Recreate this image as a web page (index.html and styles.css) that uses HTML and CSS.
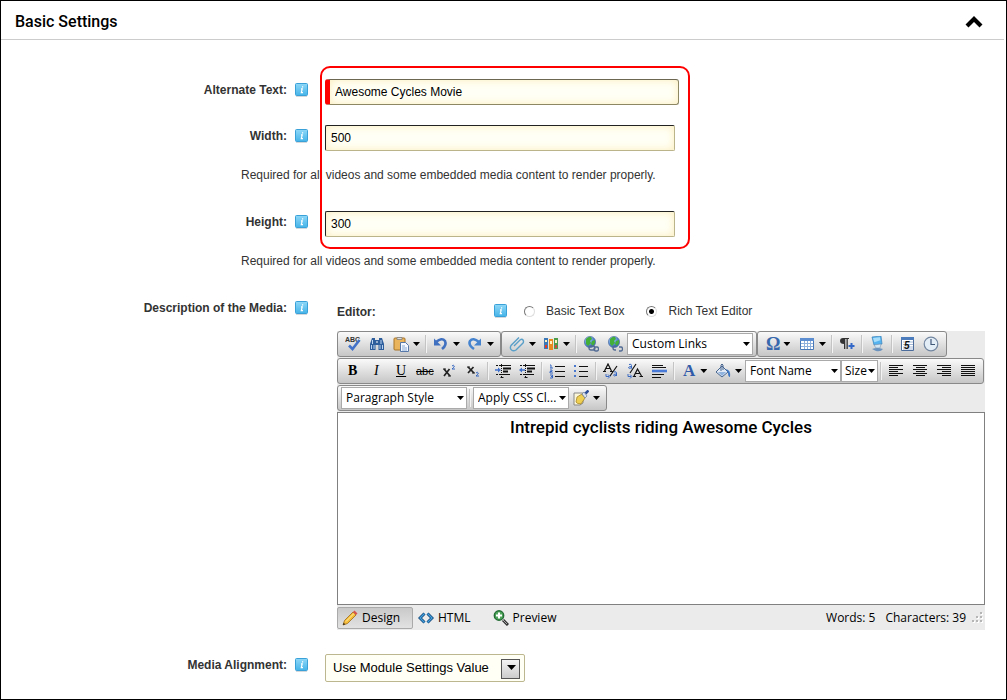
FILE: index.html
```html
<!DOCTYPE html>
<html lang="en">
<head>
<meta charset="utf-8">
<title>Basic Settings</title>
<link rel="stylesheet" href="styles.css">
</head>
<body>
<svg class="sprite" aria-hidden="true">
  <defs>
    <linearGradient id="info-fill" x1="0" y1="0" x2="0" y2="1"><stop offset="0" stop-color="#8fd8f8"/><stop offset="1" stop-color="#45b4e8"/></linearGradient>
    <radialGradient id="globe-fill" cx=".35" cy=".3" r=".8"><stop offset="0" stop-color="#a9d4ff"/><stop offset="1" stop-color="#174fa8"/></radialGradient>
    <symbol id="info" viewBox="0 0 13 14"><path d="M1 13.5h11" stroke="#d4d8da"/><rect x=".5" y=".5" width="12" height="12" rx="1" fill="url(#info-fill)" stroke="#3aa0d8"/><path d="M7.6 3.2v1.2M6 5.9h1.2L6.3 9.6H8" stroke="#fff" stroke-width="1.2" fill="none"/></symbol>
    <symbol id="globe" viewBox="0 0 16 16"><circle cx="7" cy="6" r="5.6" fill="url(#globe-fill)" stroke="#5474a8" stroke-width=".7"/><path d="M3 3q3-3 5-2l1 2-2 2 1 2-3 3-2-2zM9 5l3-1v3l-2 3-2-2z" fill="#43ae38"/></symbol>
  </defs>
</svg>
<main class="panel">
  <header class="panel-head">
    <h2 class="panel-title">Basic Settings</h2>
    <button class="collapse" type="button" aria-label="Collapse"><svg width="18" height="12" viewBox="0 0 18 12"><path d="M2 10 9 3l7 7" fill="none" stroke="#000" stroke-width="4.2"/></svg></button>
  </header>

  <form class="form">
    <div class="highlight"></div>
    <div class="row">
      <div class="label"><label for="alt">Alternate Text:</label><svg class="info"><use href="#info"/></svg></div>
      <input class="text required" id="alt" type="text" value="Awesome Cycles Movie">
    </div>
    <div class="row">
      <div class="label"><label for="width">Width:</label><svg class="info"><use href="#info"/></svg></div>
      <input class="text" id="width" type="text" value="500">
    </div>
    <p class="note">Required for all videos and some embedded media content to render properly.</p>
    <div class="row">
      <div class="label"><label for="height">Height:</label><svg class="info"><use href="#info"/></svg></div>
      <input class="text" id="height" type="text" value="300">
    </div>
    <p class="note">Required for all videos and some embedded media content to render properly.</p>

    <div class="row media">
      <div class="label"><span>Description of the Media:</span><svg class="info"><use href="#info"/></svg></div>
      <div class="media-body">
        <div class="mode">
          <span class="mode-label">Editor:</span>
          <svg class="info"><use href="#info"/></svg>
          <label class="choice"><input type="radio" name="mode">Basic Text Box</label>
          <label class="choice"><input type="radio" name="mode" checked>Rich Text Editor</label>
        </div>

        <div class="editor">
          <div class="bar">
            <div class="group">
              <button class="tool" type="button" title="Spell check"><svg class="ico" viewBox="0 0 16 16"><text x="0" y="6" class="tiny">ABC</text><path d="M4 9.500 7.500 13 14.500 4" fill="none" stroke="#4472c8" stroke-width="2.600"/></svg></button>
              <button class="tool" type="button" title="Find"><svg class="ico" viewBox="0 0 16 16"><path d="M3 2h3v2h4V2h3l2 6v6H9.500V9h-3v5H1V8z" fill="#2e5e9c"/><path d="M3.500 4v4M12 4v4M2.500 9v4M5 9v4M11 9v4M13.500 9v4" stroke="#bcd4f0"/><path d="M7 6h2" stroke="#fff"/></svg></button>
              <button class="tool drop" type="button" title="Paste"><svg class="ico" viewBox="0 0 16 16"><rect x="1" y="2" width="11" height="12" rx="1" fill="#e9b45c" stroke="#a87428"/><path d="M4 3.500V1.500h5v2z" fill="#ddd" stroke="#777" stroke-width=".7"/><path d="M7.500 6.500h5l3 3v6h-8z" fill="#f5f9ff" stroke="#5578a8"/><path d="M9 10h3M9 12h5M9 14h5" stroke="#6b94c8" stroke-width=".8"/></svg></button>
              <span class="sep"></span>
              <button class="tool drop" type="button" title="Undo"><svg class="ico" viewBox="0 0 16 16"><path d="M3 6q6-5 9-1 2 4-3 8" fill="none" stroke="#4070c0" stroke-width="2.600"/><path d="M1 2.500v7h7z" fill="#4070c0"/></svg></button>
              <button class="tool drop" type="button" title="Redo"><svg class="ico" viewBox="0 0 16 16"><path d="M12 6q-6-5-9-1-2 4 4 8" fill="none" stroke="#4583cf" stroke-width="2.600"/><path d="M14 2.500v7H7z" fill="#4583cf"/></svg></button>
            </div>
            <div class="group">
              <button class="tool drop" type="button" title="Attach"><svg class="ico" viewBox="0 0 16 16"><path d="m5 10 6-6q2-1.500 3 0t0 3l-7 7q-2.500 1.500-4.500 0T2 9.500l8-8" fill="none" stroke="#5a9fc8" stroke-width="1.400"/></svg></button>
              <button class="tool drop" type="button" title="Media"><svg class="ico" viewBox="0 0 16 16"><path d="M1 2h4v11H1z" fill="#3b78b8"/><path d="M6 3h4v11H6z" fill="#e88b1c"/><path d="M11 2h4v11h-4z" fill="#4d9c4a"/><path d="M2 4h2v2H2zM7 5h2v3H7zM12 4h2v3h-2z" fill="#fff3c0"/><path d="M2 9h2v3H2z" fill="#e03c28"/><path d="M12 9h2v3h-2z" fill="#cf4a3b"/></svg></button>
              <span class="sep"></span>
              <button class="tool" type="button" title="Insert link"><svg class="ico" viewBox="0 0 16 16"><use href="#globe"/><path d="M6 12q0-2 2-2h2q2 0 2 2t-2 2H8q-2 0-2-2zm5 1q0-2 2-2h1q1.500 0 1.500 2T14 15h-1q-2 0-2-2z" fill="none" stroke="#526b94" stroke-width="1.300"/></svg></button>
              <button class="tool" type="button" title="Remove link"><svg class="ico" viewBox="0 0 16 16"><use href="#globe"/><path d="M9 10H8q-2 0-2 2t2 2h1m3-3h2q1.500 0 1.500 2T14 15h-2" fill="none" stroke="#526b94" stroke-width="1.300"/></svg></button>
              <span class="pick wide"><select aria-label="Custom links"><option>Custom Links</option></select></span>
            </div>
            <div class="group">
              <button class="tool drop glyph omega" type="button" title="Symbol">Ω</button>
              <button class="tool drop" type="button" title="Table"><svg class="ico" viewBox="0 0 16 16"><path d="M1.500 2.500h13v11h-13z" fill="#fff" stroke="#4878b8"/><path d="M1 2h14v3H1z" fill="#5b8dd0"/><path d="M2 7.500h12M2 10.500h12M5.500 5v8M8.500 5v8M11.500 5v8" stroke="#8db0dd"/></svg></button>
              <span class="sep"></span>
              <button class="tool" type="button" title="Paragraph"><svg class="ico" viewBox="0 0 16 16"><path d="M4 2h6v1H8.800v10H7.500V3H6.300v10H5V8Q1 8 1 5t3-3z" fill="#333"/><path d="M12.500 7v6M9.500 10h6" stroke="#3468c8" stroke-width="2"/></svg></button>
              <span class="sep"></span>
              <button class="tool" type="button" title="Manage content"><svg class="ico" viewBox="0 0 16 16"><path d="m3 1 9-1 1 8-8 1z" fill="#55b4ef" stroke="#3b7fb8" stroke-width=".7"/><path d="m4 2 7-.7.3 3-6 2z" fill="#a9defb"/><path d="m5 9 7-1-1 4H7z" fill="#d5e6f3" stroke="#7795b5" stroke-width=".6"/><path d="M3 13q5-2 11 0-2 3-7 2z" fill="#6c93bd"/></svg></button>
              <span class="sep"></span>
              <button class="tool" type="button" title="Date"><svg class="ico" viewBox="0 0 16 16"><path d="M2.500 1.500h12v13h-12z" fill="#fff" stroke="#4c6c9c"/><path d="M2 1h13v3H2z" fill="#4c7cbc"/><path d="M4 6h10M4 8.500h10M4 11h10M4 13h10" stroke="#a4b8d4"/><text x="5" y="13" class="date">5</text></svg></button>
              <button class="tool" type="button" title="Time"><svg class="ico" viewBox="0 0 16 16"><circle cx="8" cy="8" r="6.800" fill="#e3edf6" stroke="#7286a0" stroke-width="1.200"/><path d="M8 3v5.500h4" fill="none" stroke="#405878" stroke-width="1.200"/></svg></button>
            </div>
          </div>

          <div class="bar">
            <div class="group">
              <button class="tool glyph bold" type="button">B</button>
              <button class="tool glyph italic" type="button">I</button>
              <button class="tool glyph under" type="button">U</button>
              <button class="tool glyph strike" type="button">abc</button>
              <button class="tool" type="button" title="Superscript"><svg class="ico" viewBox="0 0 16 16"><path d="m3 6 6 7M8.500 6 3 13" stroke="#222" stroke-width="1.700"/><path d="M2 6h3M7 13h3" stroke="#222"/><path d="M11 3q1.500-1.500 2.300 0Q13.500 4 11 6h3" fill="none" stroke="#3466c2"/></svg></button>
              <button class="tool" type="button" title="Subscript"><svg class="ico" viewBox="0 0 16 16"><path d="m3 4 6 6M8.500 4 3 10" stroke="#222" stroke-width="1.700"/><path d="M2 4h3M7 10h3" stroke="#222"/><path d="M11 10q1.500-1.500 2.300 0 .2 1-2.300 3h3" fill="none" stroke="#3466c2"/></svg></button>
              <span class="sep"></span>
              <button class="tool" type="button" title="Indent"><svg class="ico" viewBox="0 0 16 16"><path d="M1 2.500h2m1 0h12M1 11.500h2m1 0h11M5.500 14.500h3" stroke="#111"/><path d="M6.500 1v14" stroke="#111" stroke-dasharray="1 1"/><path d="M8 5.500h8M8 8.500h5" stroke="#111" stroke-width="1.800"/><path d="M0 7h4" stroke="#3f70cc" stroke-width="1.500"/><path d="M3 4.500 6 7 3 9.500z" fill="#3f70cc"/></svg></button>
              <button class="tool" type="button" title="Outdent"><svg class="ico" viewBox="0 0 16 16"><path d="M1 2.500h2m1 0h12M1 11.500h2m1 0h11M5.500 14.500h3" stroke="#111"/><path d="M6.500 1v14" stroke="#111" stroke-dasharray="1 1"/><path d="M8 5.500h8M8 8.500h5" stroke="#111" stroke-width="1.800"/><path d="M2 7h4" stroke="#3f70cc" stroke-width="1.500"/><path d="M3 4.500 0 7l3 2.500z" fill="#3f70cc"/></svg></button>
              <span class="sep"></span>
              <button class="tool" type="button" title="Numbered list"><svg class="ico" viewBox="0 0 16 16"><path d="M6 3.500h10M6 8.500h10M6 13.500h10" stroke="#111"/><path d="M1 2h1v3M1 5h3M1 7h2v1.500H1V10h3M1 12h2.500v3H1m1-1.500h1" fill="none" stroke="#3466c2"/></svg></button>
              <button class="tool" type="button" title="Bulleted list"><svg class="ico" viewBox="0 0 16 16"><path d="M6 3.500h9M6 8.500h9M6 13.500h9" stroke="#111"/><path d="M1 2h2v2H1zM1 7h2v2H1zM1 12h2v2H1z" fill="#4a78cc"/></svg></button>
              <span class="sep"></span>
              <button class="tool" type="button" title="Lower case"><svg class="ico" viewBox="0 0 16 16"><path d="M1.500 8 5 1l3.500 7M3 5.500h4M0 8.500h3M7 8.500h3M14 3 7 13" fill="none" stroke="#111" stroke-width="1.200"/><path d="M11 9q2.500-1 2.500 1v3m0-2q-3 0-3 1.300t3 0M3 11v2.500h3M5 11.500l2 2-2 2" fill="none" stroke="#3466c2"/></svg></button>
              <button class="tool" type="button" title="Upper case"><svg class="ico" viewBox="0 0 16 16"><path d="m7 13 3.500-7 4 7M8.500 10.500h4M6 13.500h3M12.500 13.500H16M9 1 3 10" fill="none" stroke="#111" stroke-width="1.200"/><path d="M2 1.500q2.500-1 2.500 1v3m0-2q-3 0-3 1.300t3 0M1 11v2.500h3M3 11.500l2 2-2 2" fill="none" stroke="#3466c2"/></svg></button>
              <button class="tool" type="button" title="Horizontal rule"><svg class="ico" viewBox="0 0 16 16"><path d="M1 2.500h11M1 4.500h14M1 11.500h12M1 14.500h9" stroke="#111"/><path d="M1 8h15" stroke="#4a7ad8" stroke-width="2.600"/></svg></button>
              <span class="sep"></span>
              <button class="tool drop glyph color" type="button" title="Text color">A</button>
              <button class="tool drop" type="button" title="Fill"><svg class="ico" viewBox="0 0 16 16"><path d="m1 9 6-6 6 6-6 5z" fill="#e0e9f4" stroke="#46658f"/><path d="m3 9 8 0-4 4z" fill="#91b4df"/><path d="M6 8V2q1-2 2 0v5" fill="none" stroke="#46658f"/><path d="M11 6q5 1 4 8-2 0-2-4z" fill="#3e78c4"/></svg></button>
              <span class="pick font"><select aria-label="Font name"><option>Font Name</option></select></span><span class="pick size"><select aria-label="Size"><option>Size</option></select></span>
              <span class="sep"></span>
              <button class="tool" type="button" title="Align left"><svg class="ico" viewBox="0 0 16 16"><path d="M1 2.500h14M1 4.500h9M1 6.500h14M1 8.500h9M1 10.500h14M1 12.500h9" stroke="#111"/></svg></button>
              <button class="tool" type="button" title="Center"><svg class="ico" viewBox="0 0 16 16"><path d="M1 2.500h14M4 4.500h9M1 6.500h14M4 8.500h9M1 10.500h14M4 12.500h9" stroke="#111"/></svg></button>
              <button class="tool" type="button" title="Align right"><svg class="ico" viewBox="0 0 16 16"><path d="M1 2.500h14M6 4.500h9M1 6.500h14M6 8.500h9M1 10.500h14M6 12.500h9" stroke="#111"/></svg></button>
              <button class="tool" type="button" title="Justify"><svg class="ico" viewBox="0 0 16 16"><path d="M1 2.500h14M1 4.500h14M1 6.500h14M1 8.500h14M1 10.500h14M1 12.500h14" stroke="#111"/></svg></button>
            </div>
          </div>

          <div class="bar">
            <div class="group">
              <span class="pick wide"><select aria-label="Paragraph style"><option>Paragraph Style</option></select></span>
              <span class="sep"></span>
              <span class="pick font"><select aria-label="CSS class"><option>Apply CSS Cl...</option></select></span>
              <button class="tool drop" type="button" title="Format stripper"><svg class="ico" viewBox="0 0 16 16"><path d="M1 3h9v10l-3 2H1z" fill="#fbf6d8" stroke="#888"/><path d="m4 7 5-3 3 4-4 6q-4 0-5-2z" fill="#efcf52" stroke="#9a7a20" stroke-width=".7"/><path d="m9 4 2-2 3 4-2 2z" fill="#dde3ec" stroke="#6a7d9c" stroke-width=".7"/><path d="m12.500 3.500 3-3" stroke="#2e4f98" stroke-width="2.600"/></svg></button>
            </div>
          </div>

          <div class="canvas" contenteditable="true"><h3 class="canvas-title">Intrepid cyclists riding Awesome Cycles</h3></div>

          <div class="status">
            <button class="view active" type="button"><svg class="ico" viewBox="0 0 16 16"><path d="m1 15 1.500-4.500L11 2l3 3-8.500 8.500z" fill="#f6bd3a" stroke="#9a6a1c" stroke-width=".8"/><path d="M4 11.500 12 3.500" stroke="#fff0a8"/><path d="m11 2 1.500-1.500 3 3L14 5z" fill="#d8534c"/><path d="m1 15 .7-2.300 1.600 1.600z" fill="#222"/></svg>Design</button>
            <button class="view html" type="button"><svg class="ico" viewBox="0 0 16 16"><path d="M6.500 3.500 2 8l4.500 4.500M9.500 3.500 14 8l-4.500 4.500" fill="none" stroke="#174a7c" stroke-width="3"/><path d="M6.500 3.500 2 8l4.500 4.500M9.500 3.500 14 8l-4.500 4.500" fill="none" stroke="#43a2e0" stroke-width="1.200"/></svg>HTML</button>
            <button class="view preview" type="button"><svg class="ico" viewBox="0 0 16 16"><path d="m10 10 5 5" stroke="#333" stroke-width="3"/><path d="m10 10 4 4" stroke="#aaa"/><circle cx="6" cy="5.500" r="4.700" fill="#4da65a" stroke="#236c35" stroke-width="1.400"/><path d="M6 2.500v6M3 5.500h6" stroke="#fff" stroke-width="2"/></svg>Preview</button>
            <span class="counts"><span>Words: 5</span><span>Characters: 39</span></span>
            <svg class="grip" viewBox="0 0 12 12"><path d="M9 1h2v2H9zM5 5h2v2H5zM9 5h2v2H9zM1 9h2v2H1zM5 9h2v2H5zM9 9h2v2H9z" fill="#fff"/><path d="M8 0h2v2H8zM4 4h2v2H4zM8 4h2v2H8zM0 8h2v2H0zM4 8h2v2H4zM8 8h2v2H8z" fill="#b5b5b5"/></svg>
          </div>
        </div>
      </div>
    </div>

    <div class="row align">
      <div class="label"><label for="align">Media Alignment:</label><svg class="info"><use href="#info"/></svg></div>
      <span class="module"><select id="align"><option>Use Module Settings Value</option></select></span>
    </div>
  </form>
</main>
</body>
</html>
```

FILE: styles.css
```css
* { box-sizing: border-box; }

body {
  margin: 0;
  font: 12px/16px "Liberation Sans", Arial, sans-serif;
  color: #333;
  background: #fff;
}

button, input, select { font: inherit; color: inherit; margin: 0; }

.sprite { position: absolute; width: 0; height: 0; }

.panel { min-height: 100vh; border: 1px solid #000; }

.panel-head {
  display: flex;
  align-items: center;
  justify-content: space-between;
  height: 39px;
  margin-right: 2px;
  padding: 3px 21px 0 14px;
  border-bottom: 1px solid #ccc;
}

.panel-title, .canvas-title {
  margin: 0;
  font: 500 17px/24px Roboto, sans-serif;
  color: #000;
}

.panel-title { font-size: 16px; }

.collapse { display: flex; padding: 0; border: 0; background: none; }

.form { position: relative; padding: 39px 21px 16px 0; }

.highlight {
  position: absolute;
  top: 26px;
  left: 319px;
  width: 370px;
  height: 183px;
  border: 2px solid #f00;
  border-radius: 10px;
  pointer-events: none;
  z-index: 1;
}

.row { display: flex; align-items: flex-start; gap: 17px; margin-bottom: 20px; }

.label {
  display: flex;
  flex: 0 0 307px;
  justify-content: flex-end;
  gap: 8px;
  padding-top: 3px;
  font-weight: bold;
}

.info { width: 13px; height: 14px; margin-top: 1px; flex: none; }

.text {
  width: 350px;
  height: 26px;
  padding: 0 5px;
  color: #000;
  background: #fffff5;
  border: 1px solid #bbb48a;
  border-top-color: #222;
  border-left-color: #222;
  border-radius: 2px;
  box-shadow: inset 0 0 8px #fbecbc;
}

.text.required {
  width: 354px;
  border-color: #6b6750 #8d8764 #8d8764 #f00;
  border-left-width: 5px;
  border-radius: 3px;
}

.note { margin: -4px 0 28px 240px; }

.media { gap: 29px; margin-bottom: 24px; }
.media-body { flex: 1; min-width: 0; }

.mode { display: flex; height: 34px; padding-top: 6px; }
.mode-label { width: 157px; padding-top: 1px; font-weight: bold; }
.choice { display: flex; align-items: center; gap: 11px; height: 16px; margin-left: 17px; }
.choice + .choice { margin-left: 22px; }

.choice input {
  appearance: none;
  width: 11px;
  height: 11px;
  border: 1px solid #ddd;
  border-top-color: #777;
  border-left-color: #777;
  border-radius: 50%;
  background: #fff;
}

.choice input:checked { background: radial-gradient(#000 0 2px, #fff 3px); }

.editor {
  background: #ebebeb;
  font: 12px/16px "Open Sans", "Noto Sans", sans-serif;
  color: #000;
}

.bar { display: flex; padding-bottom: 1px; }

.group {
  display: flex;
  height: 26px;
  padding: 0 3px;
  border: 1px solid #898989;
  border-radius: 3px;
  background: linear-gradient(#fafafa, #e0e0e0 50%, #c6c6c6);
}

.tool {
  position: relative;
  display: flex;
  align-items: center;
  flex: none;
  width: 24px;
  padding: 0 4px;
  border: 0;
  background: none;
}

.ico { width: 16px; height: 16px; flex: none; }

.drop { width: 34px; }

.drop::after, .pick::after {
  content: "";
  flex: none;
  width: 7px;
  height: 4px;
  background: #000;
  clip-path: polygon(0 0, 100% 0, 50% 100%);
}

.drop::after { margin-left: 4px; }

.sep { width: 2px; height: 18px; margin: 3px 2px; background: linear-gradient(90deg, #c4c4c4 50%, #f4f4f4 50%); }

.glyph { font: bold 14px/16px "Liberation Serif", serif; padding: 0 7px; }
.italic { font-style: italic; font-weight: normal; padding-left: 9px; }
.under { font-weight: normal; text-decoration: underline; }
.strike { font: 11px/16px "Liberation Sans", sans-serif; text-decoration: line-through; padding: 0 3px; }
.omega { font-size: 18px; color: #3768ad; padding: 0 5px; }
.omega::after { margin-left: 3px; }
.color { font-size: 17px; color: #315ba8; padding: 0 6px; }
.color::after { margin-left: 5px; }
.tiny { font: bold 7px "Liberation Sans", sans-serif; fill: #333; }
.date { font: bold italic 10px "Liberation Sans", sans-serif; fill: #111; }

.pick {
  display: flex;
  align-items: center;
  position: relative;
  height: 22px;
  margin-top: 1px;
  border: 1px solid #aaa;
  background: #fff;
}

.pick select {
  width: 100%;
  height: 20px;
  padding: 0 0 0 4px;
  border: 0;
  appearance: none;
  background: none;
}

.pick::after { position: absolute; right: 2px; pointer-events: none; }
.wide { width: 126px; }
.font { width: 96px; }
.size { width: 37px; }
.size select { padding-left: 3px; }

.canvas {
  min-height: 193px;
  padding: 2px;
  border: 1px solid #808080;
  background: #fff;
  text-align: center;
}

.status { display: flex; align-items: center; height: 25px; }

.view {
  display: flex;
  align-items: center;
  gap: 4px;
  height: 22px;
  padding: 0 4px;
  border: 1px solid transparent;
  border-radius: 2px;
  background: none;
}

.view.active { width: 76px; border-color: #aaa; background: linear-gradient(#c9c9c9, #e2e2e2); }
.html { margin-right: 12px; }
.counts { display: flex; gap: 10px; margin-left: auto; }
.grip { width: 12px; height: 12px; margin: 0 1px 0 6px; }

.align { margin-bottom: 0; }

.module { position: relative; width: 200px; }

.module select {
  display: block;
  width: 100%;
  height: 28px;
  padding: 0 7px;
  border: 1px solid #bdb78f;
  border-radius: 2px;
  background: #fffff5;
  font-size: 13px;
  color: #000;
  appearance: none;
}

.module::before, .module::after { content: ""; position: absolute; pointer-events: none; }

.module::before {
  top: 5px;
  right: 5px;
  width: 17px;
  height: 18px;
  border: 1px solid #555;
  background: linear-gradient(#f4f4f4, #ccc);
}

.module::after {
  top: 11px;
  right: 9px;
  width: 9px;
  height: 5px;
  background: #000;
  clip-path: polygon(0 0, 100% 0, 50% 100%);
}
```
